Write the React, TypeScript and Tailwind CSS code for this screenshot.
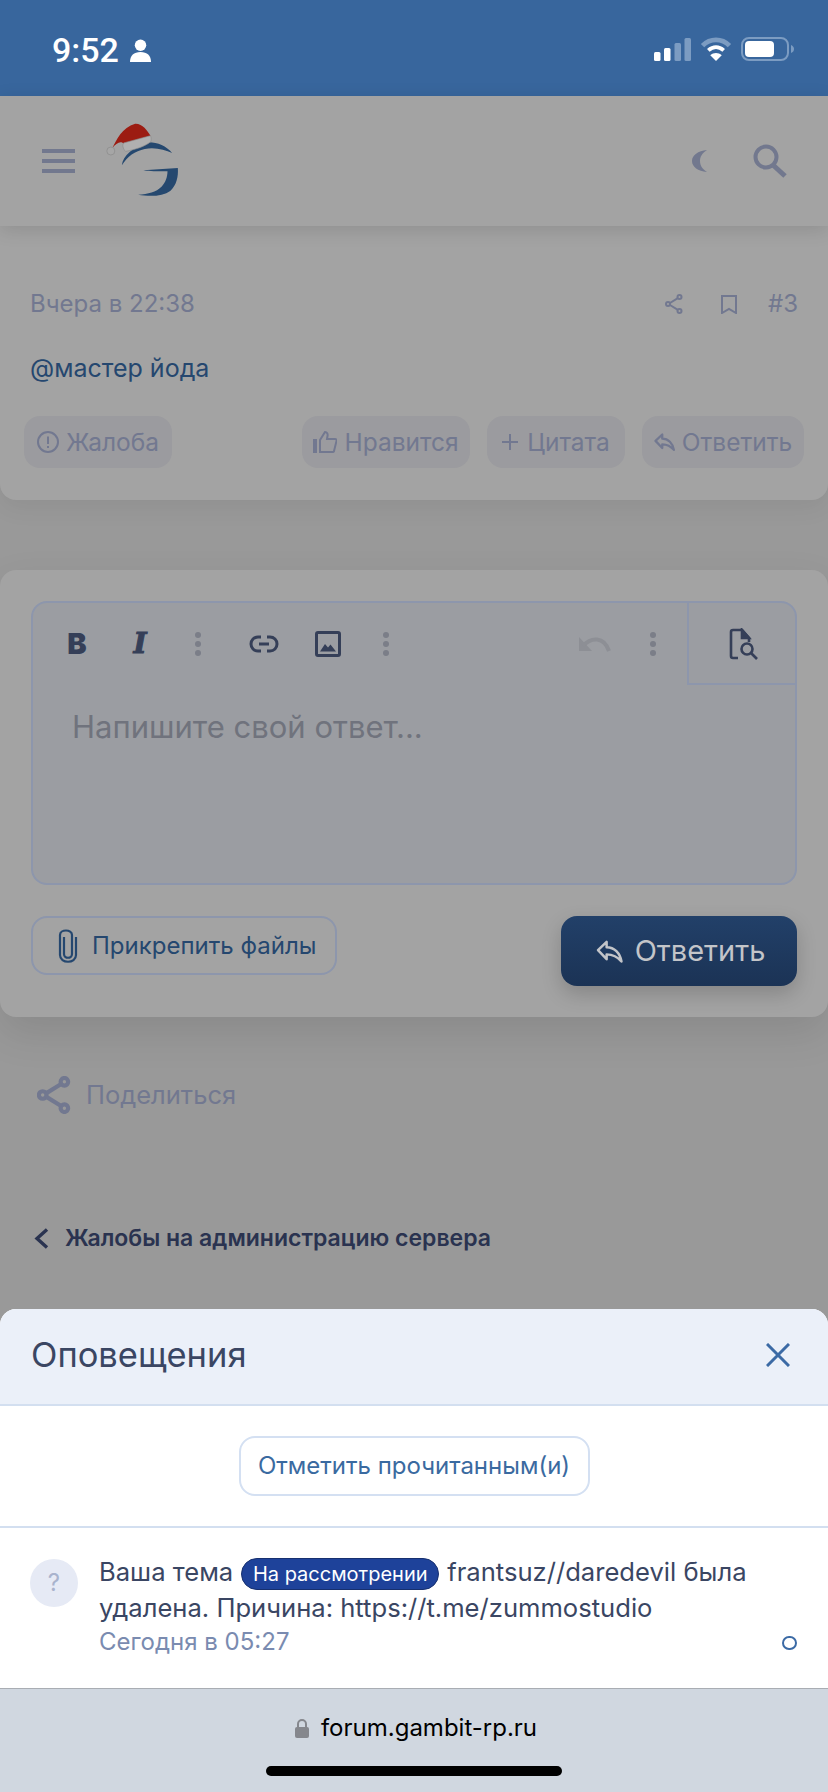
import React from "react";

const Dots = ({ c = "#7b7e88" }: { c?: string }) => (
  <svg width="10" height="26" viewBox="0 0 10 26" fill={c}>
    <circle cx="5" cy="4" r="3" /><circle cx="5" cy="13" r="3" /><circle cx="5" cy="22" r="3" />
  </svg>
);

const Reply = ({ c, w = 22, h = 19, sw = 2.400 }: { c: string; w?: number; h?: number; sw?: number }) => (
  <svg width={w} height={h} viewBox="0 0 28 24" fill="none" stroke={c} strokeWidth={sw} strokeLinejoin="round">
    <path d="M2 10.500 11 2v5.500c8 0 14 6 15.500 15C22 17 17 15 11 15v5z" />
  </svg>
);

const ShareIcon = ({ c, w = 18, h = 20, sw = 2 }: { c: string; w?: number; h?: number; sw?: number }) => (
  <svg width={w} height={h} viewBox="0 0 18 20" fill="none" stroke={c} strokeWidth={sw}>
    <circle cx="14.500" cy="3" r="2" /><circle cx="3" cy="10" r="2" /><circle cx="14.500" cy="17" r="2" />
    <path d="M5 9 12.800 4.200M5 11l7.800 4.800" />
  </svg>
);

function Logo() {
  return (
    <svg width="73" height="74" viewBox="78 70 218 222">
      <path d="M125 197C128 168 160 142 200 128c28-2 58 10 76 32-22-10-52-18-82-12-30 6-52 22-69 49z" fill="#25486f" />
      <path d="M190 212 293 205c2 26-4 52-22 68-24 18-64 18-97 12 30-2 54-8 70-24 12-12 18-30 18-46-24-2-50 2-72-3z" fill="#25486f" />
      <path d="M96 146C108 122 126 82 165 72c22-1 36 20 46 36l-81 24c-8-10-22-2-34 14z" fill="#9c1c12" />
      <path d="M130 130 211 108c3 6 2 14 1 18-18 14-46 24-76 29-8-8-10-18-6-25z" fill="#b0b0b0" stroke="#8c8c8c" strokeWidth="2" />
      <circle cx="92" cy="154" r="12" fill="#a6a6a6" stroke="#8a8a8a" strokeWidth="2" />
    </svg>
  );
}

const Action = ({ children, w }: { children: React.ReactNode; w: string }) => (
  <div className={`flex h-[52px] items-center justify-center gap-[7px] rounded-[16px] bg-[#9b9b9f] text-[24.500px] text-[#727890] ${w}`}>
    {children}
  </div>
);

export default function App() {
  return (
    <div className="flex h-[1792px] w-[828px] flex-col overflow-hidden bg-[#999999] font-['Inter',sans-serif]">
      {/* status bar */}
      <div className="flex h-[96px] shrink-0 items-start justify-between bg-[#38669d] pl-[52px] pr-[34px] pt-[33px]">
        <div className="flex items-center gap-[11px]">
          <span className="font-['Roboto',sans-serif] text-[34px] font-medium leading-[34px] text-white">9:52</span>
          <svg width="21" height="23" viewBox="0 0 22 24" fill="#fff">
            <circle cx="11" cy="6.500" r="6" /><path d="M0 24c0-7 4-10.500 11-10.500S22 17 22 24z" />
          </svg>
        </div>
        <div className="flex items-center gap-[9px] pt-[4px]">
          <svg width="37" height="23" viewBox="0 0 37 23">
            <rect x="0" y="14" width="6.500" height="9" rx="1.500" fill="#fff" />
            <rect x="10" y="10" width="6.500" height="13" rx="1.500" fill="#fff" />
            <rect x="20.500" y="5" width="6.500" height="18" rx="1.500" fill="#7c9cc2" />
            <rect x="30.500" y="0" width="6.500" height="23" rx="1.500" fill="#7c9cc2" />
          </svg>
          <svg width="32" height="24" viewBox="0 0 32 25" fill="none">
            <path d="M2 9C10 1 22 1 30 9" stroke="#7c9cc2" strokeWidth="5" />
            <path d="M8 14c5-4.500 11-4.500 16 0" stroke="#fff" strokeWidth="4" />
            <path d="M16 25 10 19c3.500-3 8.500-3 12 0z" fill="#fff" />
          </svg>
          <svg width="53" height="24" viewBox="0 0 53 24" fill="none">
            <rect x="1" y="1" width="46" height="22" rx="7" stroke="#7c9cc2" strokeWidth="2" />
            <rect x="4" y="4" width="29" height="16" rx="4" fill="#fff" />
            <path d="M50 8c2 1 3 2 3 4s-1 3-3 4z" fill="#7c9cc2" />
          </svg>
        </div>
      </div>

      {/* site header */}
      <div className="z-20 flex h-[130px] shrink-0 items-center bg-[#a3a3a3] pl-[42px] pr-[41px] shadow-[0_4px_18px_rgba(0,0,0,0.12)]">
        <div className="flex w-[33px] flex-col gap-[6px]">
          <span className="h-[4px] bg-[#72788e]" /><span className="h-[4px] bg-[#72788e]" /><span className="h-[4px] bg-[#72788e]" />
        </div>
        <div className="ml-[31px] mt-[-2px]"><Logo /></div>
        <div className="ml-auto flex items-center gap-[45px]">
          <svg width="16" height="22" viewBox="0 0 16 22"><path d="M15 0C6 1 0 5 0 11s6 10 15 11C10 19 8 15 8 11s2-8 7-11z" fill="#72788e" /></svg>
          <svg width="34" height="34" viewBox="0 0 34 34" fill="none" stroke="#72788e">
            <circle cx="13" cy="13" r="10.500" strokeWidth="4" /><path d="M20 21 32 32" strokeWidth="5" />
          </svg>
        </div>
      </div>

      {/* post card */}
      <div className="z-10 flex h-[274px] shrink-0 flex-col rounded-b-[16px] bg-[#a3a3a3] shadow-[0_8px_24px_rgba(0,0,0,0.06)]">
        <div className="flex items-center justify-between pl-[30px] pr-[30px] pt-[64px] text-[24px] leading-[28px] text-[#727890]">
          <span>Вчера в 22:38</span>
          <div className="flex items-center">
            <ShareIcon c="#727890" />
            <svg className="ml-[38px]" width="16" height="19" viewBox="0 0 16 19" fill="none" stroke="#727890" strokeWidth="2"><path d="M1 1h14v17l-7-4-7 4z" /></svg>
            <span className="ml-[31px]">#3</span>
          </div>
        </div>
        <div className="pl-[30px] pt-[35px] text-[25px] leading-[30px] text-[#25476f]">@мастер йода</div>
        <div className="flex items-center pl-[24px] pr-[24px] pt-[33px]">
          <Action w="w-[148px]">
            <svg width="22" height="22" viewBox="0 0 22 22" fill="none" stroke="#727890" strokeWidth="2"><circle cx="11" cy="11" r="10" /><path d="M11 5.500v7.500M11 15v2" /></svg>
            Жалоба
          </Action>
          <div className="ml-auto flex gap-[17px]">
            <Action w="w-[168px]">
              <svg width="24" height="22" viewBox="0 0 24 22">
                <rect x="0" y="8" width="4" height="14" fill="#727890" />
                <path d="M7 9 12 1c2 0 3 2 2.500 4L14 8h8c1.500 0 2 1 1.500 2L21 20c0 1-1 1-2 1H7z" fill="none" stroke="#727890" strokeWidth="2" />
              </svg>
              Нравится
            </Action>
            <Action w="w-[138px]">
              <svg width="16" height="16" viewBox="0 0 16 16" stroke="#727890" strokeWidth="2"><path d="M8 0v16M0 8h16" /></svg>
              <span className="ml-[2px]">Цитата</span>
            </Action>
            <Action w="w-[162px]">
              <Reply c="#727890" w={21} h={18} sw={3} />
              Ответить
            </Action>
          </div>
        </div>
      </div>

      {/* reply card */}
      <div className="z-10 mt-[70px] flex h-[447px] shrink-0 flex-col rounded-[16px] bg-[#a3a3a3] px-[31px] pt-[31px] shadow-[0_16px_40px_rgba(0,0,0,0.1)]">
        <div className="h-[284px] shrink-0 rounded-[16px] border-2 border-[#8d96ac] bg-[#9b9da2]">
          <div className="flex h-[80px] items-start">
            <div className="flex flex-1 items-center pl-[35px] pt-[26px]">
              <span className="flex w-[18px] justify-center text-[29px] font-black leading-[30px] text-[#353f58]">B</span>
              <span className="ml-[45px] flex w-[18px] justify-center font-['DejaVu_Serif',serif] text-[28px] font-bold italic leading-[30px] text-[#353f58] [-webkit-text-stroke:1px_#353f58]">I</span>
              <span className="ml-[44px]"><Dots /></span>
              <svg className="ml-[46px]" width="30" height="18" viewBox="0 0 30 18" fill="none" stroke="#353f58" strokeWidth="3">
                <path d="M12 2H9C5 2 2 5 2 9s3 7 7 7h3M18 2h3c4 0 7 3 7 7s-3 7-7 7h-3M10 9h10" />
              </svg>
              <svg className="ml-[36px]" width="26" height="26" viewBox="0 0 26 26" fill="none">
                <rect x="1.500" y="1.500" width="23" height="23" rx="1.500" stroke="#353f58" strokeWidth="3" />
                <path d="M5 20.500 10 13l3 3.500 2.500-3 5.500 7z" fill="#353f58" />
              </svg>
              <span className="ml-[40px]"><Dots /></span>
              <svg className="ml-auto" width="32" height="16" viewBox="0 0 32 16" fill="none">
                <path d="M0 1v14h13z" fill="#8d8f95" />
                <path d="M4 10C12 1 25 0 30 15" stroke="#8d8f95" strokeWidth="4" />
              </svg>
              <span className="ml-[37px] mr-[29px]"><Dots /></span>
            </div>
            <div className="flex h-[82px] w-[108px] shrink-0 items-center justify-center border-b-2 border-l-2 border-[#8d96ac] pl-[4px] pt-[2px]">
              <svg width="30" height="32" viewBox="0 0 30 32" fill="none" stroke="#353f58" strokeWidth="2.600">
                <path d="M9 30H4c-1.500 0-2-1-2-2V4c0-1.500 1-2 2-2h9l7 8v4" />
                <path d="M13 2v8h7z" fill="#353f58" />
                <circle cx="18" cy="21" r="5.500" /><path d="m22 25 6 6" />
              </svg>
            </div>
          </div>
          <div className="pl-[39px] pt-[26px] text-[31px] leading-[36px] text-[#70737d]">Напишите свой ответ...</div>
        </div>
        <div className="mt-[31px] flex items-start justify-between">
          <div className="flex h-[59px] w-[306px] items-center rounded-[16px] border-2 border-[#8d96ac] pl-[25px]">
            <svg width="20" height="34" viewBox="0 0 20 34" fill="none" stroke="#25476f" strokeWidth="2.200">
              <path d="M6 8v17c0 5 8 5 8 0V6c0-6-12-6-12 0v20c0 9 16 9 16 0V8" />
            </svg>
            <span className="ml-[14px] text-[24px] leading-[30px] text-[#25476f]">Прикрепить файлы</span>
          </div>
          <div className="flex h-[70px] w-[236px] items-center justify-center gap-[12px] rounded-[16px] bg-gradient-to-b from-[#224069] to-[#1b3355] pl-[3px] text-[29px] text-[#c3c5c9] shadow-[0_8px_20px_rgba(0,0,0,0.18)]">
            <Reply c="#c3c5c9" w={27} h={23} sw={2.600} />
            Ответить
          </div>
        </div>
      </div>

      {/* share */}
      <div className="mt-[59px] flex items-center pl-[37px]">
        <ShareIcon c="#727890" w={34} h={38} sw={2.200} />
        <span className="ml-[15px] text-[25.500px] leading-[38px] text-[#727890]">Поделиться</span>
      </div>

      {/* breadcrumb */}
      <div className="mt-[110px] flex items-center pl-[34px]">
        <svg width="15" height="21" viewBox="0 0 15 21" fill="none" stroke="#2a3350" strokeWidth="3.400"><path d="M13 1.500 3 10.500l10 9" /></svg>
        <span className="ml-[16px] text-[23px] font-semibold leading-[28px] text-[#2a3350]">Жалобы на администрацию сервера</span>
      </div>

      {/* notifications sheet */}
      <div className="z-30 mt-auto flex shrink-0 flex-col overflow-hidden rounded-t-[16px] bg-white">
        <div className="flex h-[97px] items-center justify-between border-b-2 border-[#d3dff0] bg-[#ebf0f9] pb-[4px] pl-[31px] pr-[38px]">
          <span className="text-[34.500px] leading-[40px] text-[#3a4663]">Оповещения</span>
          <svg width="24" height="24" viewBox="0 0 24 24" stroke="#3b6aa5" strokeWidth="3"><path d="M1 1l22 22M23 1 1 23" /></svg>
        </div>
        <div className="flex h-[122px] items-center justify-center border-b-2 border-[#d3dff0]">
          <div className="flex h-[60px] w-[351px] items-center justify-center rounded-[16px] border-2 border-[#d4e0f2] text-[24px] text-[#3a6aa0]">
            Отметить прочитанным(и)
          </div>
        </div>
        <div className="flex h-[160px] pl-[30px] pr-[31px] pt-[26px]">
          <div className="mt-[5px] flex h-[48px] w-[48px] shrink-0 items-center justify-center rounded-full bg-[#e6eaf5] text-[24px] text-[#a9b3cd]">?</div>
          <div className="ml-[21px] flex-1 text-[#3a4663]">
            <div className="flex h-[36px] items-center gap-[8px] text-[25.600px] leading-[36px]">
              <span>Ваша тема</span>
              <span className="mt-[4px] h-[32px] w-[198px] rounded-full border border-[#17306f] bg-[#1e429a] text-center text-[20px] leading-[30px] text-white">На рассмотрении</span>
              <span>frantsuz//daredevil была</span>
            </div>
            <div className="text-[25.600px] leading-[36px]">удалена. Причина: https://t.me/zummostudio</div>
            <div className="mt-[2px] flex items-center justify-between text-[24px] leading-[28px] text-[#7a8bb0]">
              <span>Сегодня в 05:27</span>
              <span className="mt-[2px] h-[14px] w-[15px] rounded-full border-2 border-[#3b6aa5]" />
            </div>
          </div>
        </div>
        <div className="flex h-[104px] flex-col items-center border-t border-[#a9adb3] bg-[#d0d7e0] pt-[24px]">
          <div className="ml-[4px] flex items-center gap-[12px]">
            <svg width="14" height="19" viewBox="0 0 14 19" fill="#85878d"><path d="M2 8V5a5 5 0 0 1 10 0v3h-2V5a3 3 0 0 0-6 0v3z" /><rect y="8" width="14" height="11" rx="2" /></svg>
            <span className="text-[24px] leading-[30px] text-black">forum.gambit-rp.ru</span>
          </div>
          <div className="mt-[23px] h-[10px] w-[296px] rounded-full bg-black" />
        </div>
      </div>
    </div>
  );
}
